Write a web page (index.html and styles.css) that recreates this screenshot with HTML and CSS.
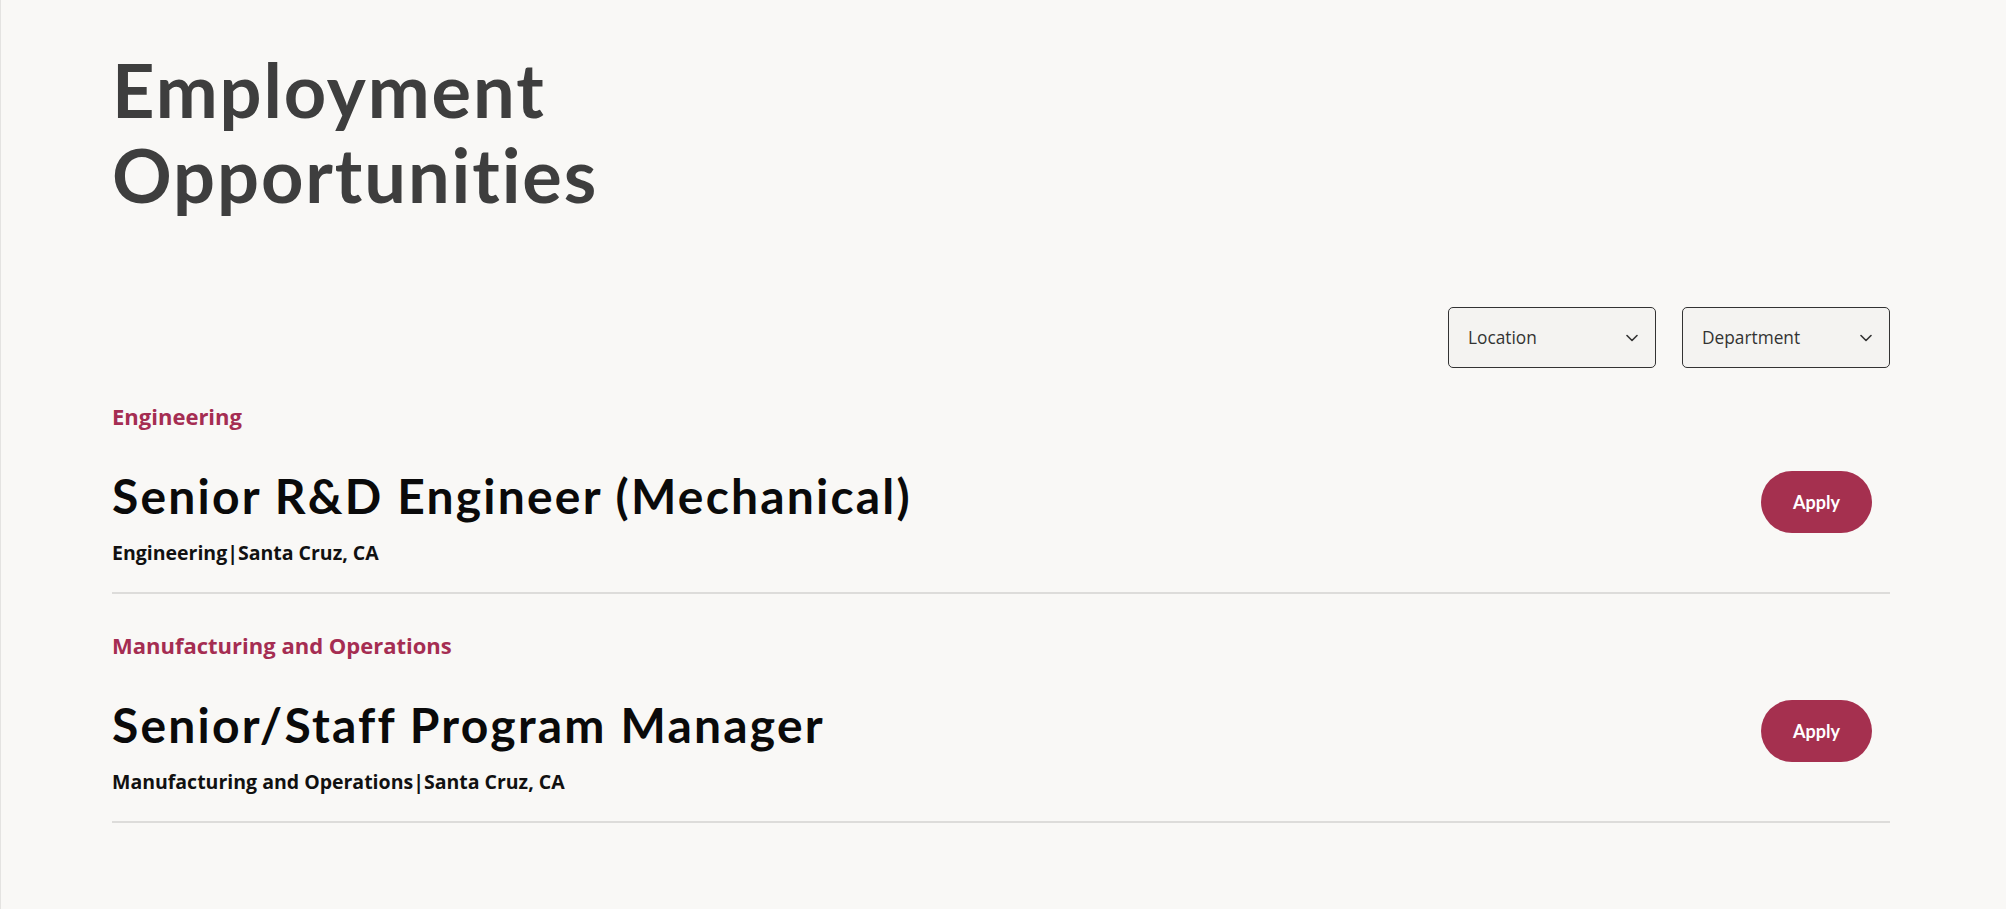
FILE: index.html
```html
<!DOCTYPE html>
<html lang="en">
<head>
<meta charset="utf-8">
<title>Employment Opportunities</title>
<link rel="stylesheet" href="styles.css">
</head>
<body>
<main class="page">
  <h1 class="page-title">Employment<br>Opportunities</h1>

  <div class="filters">
    <div class="select">
      <span class="select-label">Location</span>
      <svg class="chevron" width="12" height="8" viewBox="0 0 12 8"><polyline points="1,1.5 6,6.5 11,1.5" fill="none" stroke="#333" stroke-width="1.6" stroke-linecap="round" stroke-linejoin="round"/></svg>
    </div>
    <div class="select">
      <span class="select-label">Department</span>
      <svg class="chevron" width="12" height="8" viewBox="0 0 12 8"><polyline points="1,1.5 6,6.5 11,1.5" fill="none" stroke="#333" stroke-width="1.6" stroke-linecap="round" stroke-linejoin="round"/></svg>
    </div>
  </div>

  <section class="dept">
    <h3 class="dept-name">Engineering</h3>
    <div class="job">
      <div class="job-info">
        <h2 class="job-title">Senior R&amp;D Engineer (Mechanical)</h2>
        <p class="job-meta">Engineering|Santa Cruz, CA</p>
      </div>
      <a class="apply" href="#">Apply</a>
    </div>
  </section>

  <section class="dept">
    <h3 class="dept-name">Manufacturing and Operations</h3>
    <div class="job">
      <div class="job-info">
        <h2 class="job-title">Senior/Staff Program Manager</h2>
        <p class="job-meta">Manufacturing and Operations|Santa Cruz, CA</p>
      </div>
      <a class="apply" href="#">Apply</a>
    </div>
  </section>
</main>
</body>
</html>
```

FILE: styles.css
```css
* { box-sizing: border-box; }

html, body {
  margin: 0;
  padding: 0;
}

body {
  background: #f9f8f6;
  border-left: 1px solid #e4e3e1;
  min-height: 909px;
  font-family: "Open Sans", "Noto Sans", sans-serif;
  color: #111;
}

.page {
  margin-left: 111px;
  width: 1778px;
  padding-top: 47px;
}

.page-title {
  margin: 0;
  font-family: Lato, "Noto Sans", sans-serif;
  font-weight: 700;
  font-size: 74px;
  line-height: 85px;
  letter-spacing: 1.9px;
  font-variant-ligatures: none;
  color: #3e3e3e;
}

.filters {
  display: flex;
  justify-content: flex-end;
  gap: 26px;
  margin-top: 90px;
}

.select {
  width: 208px;
  height: 61px;
  border: 1.5px solid #333;
  border-radius: 5px;
  background: #f4f3f1;
  display: flex;
  align-items: center;
  justify-content: space-between;
  padding: 0 17px 0 19px;
}

.select-label {
  font-size: 17.3px;
  color: #333;
}

.chevron { display: block; }

.dept {
  padding-top: 33px;
  border-bottom: 2px solid #dddcda;
}

.dept + .dept {
  padding-top: 36px;
}

.dept-name {
  margin: 0;
  font-size: 22px;
  font-weight: 700;
  line-height: 30px;
  color: #a52d52;
}

.job {
  display: flex;
  justify-content: space-between;
  align-items: flex-start;
  padding-top: 36px;
  padding-bottom: 26px;
}

.job-title {
  margin: 0;
  font-family: Lato, "Noto Sans", sans-serif;
  font-weight: 700;
  font-size: 48px;
  line-height: 58px;
  letter-spacing: 2.2px;
  font-variant-ligatures: none;
  color: #0a0a0a;
}

.job-meta {
  margin: 14px 0 0;
  font-size: 19.5px;
  font-weight: 700;
  line-height: 27px;
  color: #111;
}

.apply {
  margin-top: 4px;
  margin-right: 18px;
  width: 111px;
  height: 62px;
  border-radius: 31px;
  background: #a5304f;
  color: #fff;
  text-decoration: none;
  display: flex;
  align-items: center;
  justify-content: center;
  font-family: Lato, "Noto Sans", sans-serif;
  font-weight: 700;
  font-size: 18px;
}
```
